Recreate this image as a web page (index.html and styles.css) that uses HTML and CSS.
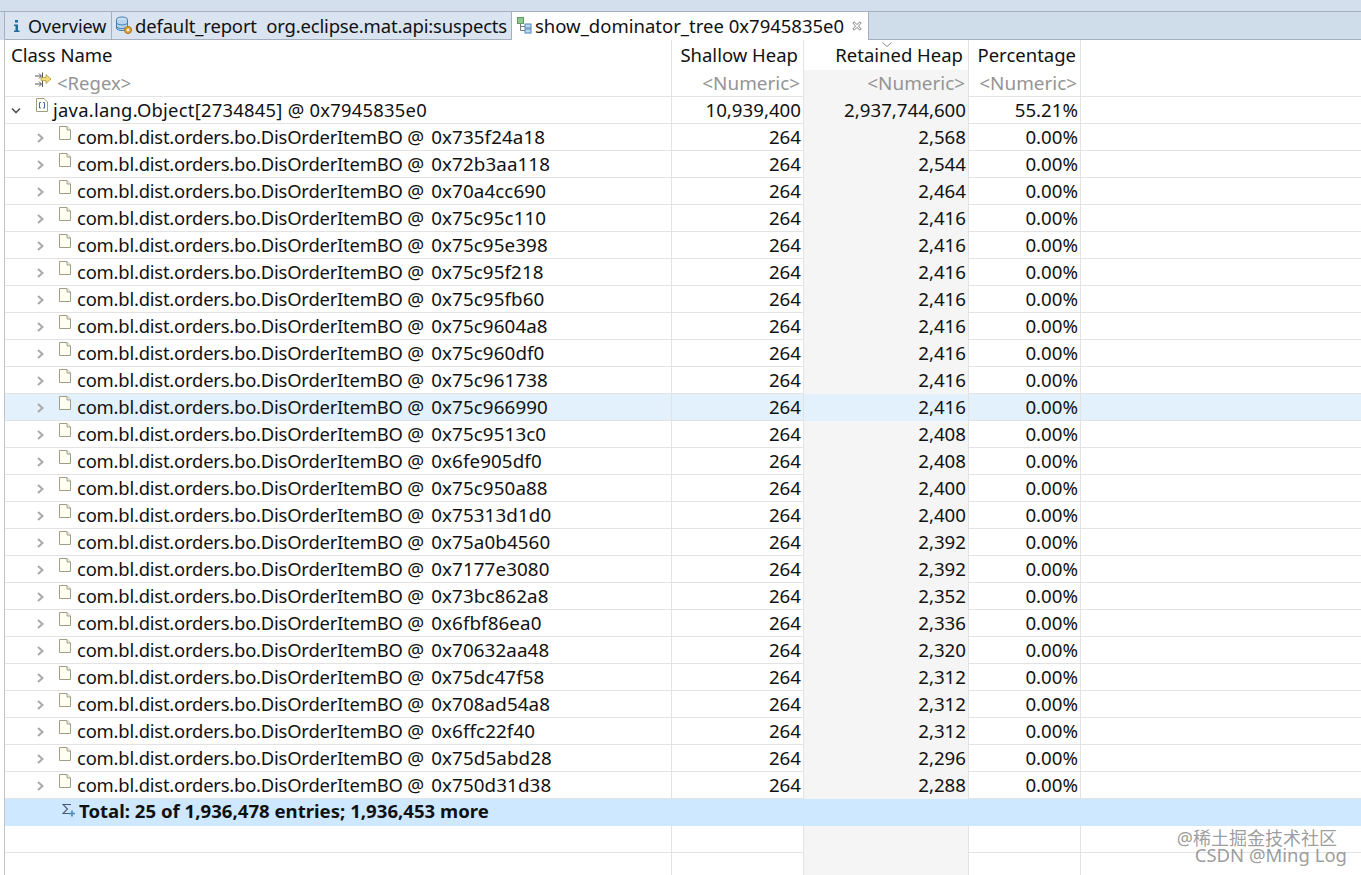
FILE: index.html
```html
<!DOCTYPE html>
<html lang="en">
<head>
<meta charset="utf-8">
<title>show_dominator_tree</title>
<link rel="stylesheet" href="styles.css">
</head>
<body>
<svg class="defs" width="0" height="0">
  <defs>
    <symbol id="file" viewBox="0 0 12 14"><path d="M.5 .5H8L11.500 4V13.500H.5Z" fill="#fffff2" stroke="#a09e84"/><path d="M8 .5V4H11.500" fill="#eeeeea" stroke="#a09e84"/></symbol>
    <symbol id="chev" viewBox="0 0 7 10"><path d="M1 1L5.500 5L1 9" fill="none" stroke="#a8a8a8" stroke-width="2"/></symbol>
  </defs>
</svg>
<div class="strip"></div>
<div class="tabs">
  <div class="tab t1">
    <svg class="ico-i" width="8" height="14" viewBox="0 0 8 14"><path d="M2 1h3v2.500h-3zM1 5.500h4v6h1.500v1.500h-5.500v-1.500h1.500v-4.500h-1.500z" fill="#1f6c9c"/></svg>
    <span>Overview</span>
  </div>
  <div class="tab t2">
    <svg class="ico-db" width="18" height="19" viewBox="0 0 18 19"><ellipse cx="7" cy="3.500" rx="5.500" ry="2.500" fill="#cfe2f3" stroke="#3f7fb5"/><path d="M1.500 3.500V12C1.500 13.500 4 14.500 7 14.500S12.500 13.500 12.500 12V3.500" fill="#b9d4ec" stroke="#3f7fb5"/><path d="M1.500 7C2.500 9.500 11.500 9.500 12.500 7M1.500 10.500C2.500 13 8 13 10 12" fill="none" stroke="#3f7fb5"/><circle cx="13" cy="14" r="3.500" fill="#e3a63c" stroke="#a8701a"/><circle cx="13" cy="14" r="1.200" fill="#fff"/></svg>
    <span class="pre">default_report  org.eclipse.mat.api:suspects</span>
  </div>
  <div class="tab t3">
    <svg class="ico-tree" width="15" height="17" viewBox="0 0 15 17"><rect x="0.500" y="0.500" width="6" height="6" fill="#8cc98c" stroke="#5f9a5f"/><path d="M3.500 7V13.500H8M3.500 9.500H8" fill="none" stroke="#777"/><rect x="8" y="7" width="6" height="4" fill="#bcd7ef" stroke="#4f86b8"/><rect x="8" y="12" width="6" height="4" fill="#bcd7ef" stroke="#4f86b8"/></svg>
    <span>show_dominator_tree 0x7945835e0</span>
    <svg class="ico-x" width="10" height="10" viewBox="0 0 10 10"><path d="M2 .8L5 3.500L8 .8L9.200 2L6.500 5L9.200 8L8 9.200L5 6.500L2 9.200L.8 8L3.500 5L.8 2Z" fill="#fff" stroke="#7a7a7a" stroke-width=".9"/></svg>
  </div>
  <div class="tab-rest"></div>
</div>
<main class="table">
  <div class="row head">
    <div class="c name"><span class="htext">Class Name</span></div>
    <div class="c num"><span class="hs">Shallow Heap</span></div>
    <div class="c num ret-head"><svg class="sort" width="10" height="5" viewBox="0 0 10 5"><path d="M.5 .5L5 4.500L9.500 .5" fill="none" stroke="#8a8a8a"/></svg><span class="hr">Retained Heap</span></div>
    <div class="c num"><span class="hp">Percentage</span></div>
    <div class="c"></div>
  </div>
  <div class="row filter">
    <div class="c name">
      <svg class="ico-filter" width="17" height="17" viewBox="0 0 17 17"><path d="M0 5H6M4 2.500L6.500 5L4 7.500M7.500 1.500V8M0 13H6M4 10.500L6.500 13L4 15.500M7.500 10V16" fill="none" stroke="#555"/><path d="M6 6.500H11V3.500L16 8L11 12.500V9.500H6Z" fill="#f3dc7a" stroke="#b59a3a" stroke-width=".8"/></svg>
      <span class="regex">&lt;Regex&gt;</span>
    </div>
    <div class="c num hint">&lt;Numeric&gt;</div>
    <div class="c num hint ret">&lt;Numeric&gt;</div>
    <div class="c num hint">&lt;Numeric&gt;</div>
    <div class="c"></div>
  </div>
  <div class="row">
    <div class="c name">
      <svg class="tw" width="10" height="8" viewBox="0 0 10 8"><path d="M1 1.500L5 5.500L9 1.500" fill="none" stroke="#555" stroke-width="1.700"/></svg>
      <svg class="ico-arr" width="12" height="14" viewBox="0 0 12 14"><path d="M.5 .5H8L11.500 4V13.500H.5Z" fill="#fffff2" stroke="#a09e84"/><path d="M5 4.500H3.500V10H5M7 4.500H8.500V10H7" fill="none" stroke="#3f6fa8"/></svg>
      <span>java.lang.Object[2734845] @ 0x7945835e0</span>
    </div>
    <div class="c num">10,939,400</div><div class="c num ret">2,937,744,600</div><div class="c num">55.21%</div><div class="c"></div>
  </div>
  <div class="row"><div class="c name kid"><svg class="ch"><use href="#chev"/></svg><svg class="fi"><use href="#file"/></svg><span>com.bl.dist.orders.bo.DisOrderItemBO <i>@ 0x735f24a18</i></span></div><div class="c num">264</div><div class="c num ret">2,568</div><div class="c num">0.00%</div><div class="c"></div></div>
  <div class="row"><div class="c name kid"><svg class="ch"><use href="#chev"/></svg><svg class="fi"><use href="#file"/></svg><span>com.bl.dist.orders.bo.DisOrderItemBO <i>@ 0x72b3aa118</i></span></div><div class="c num">264</div><div class="c num ret">2,544</div><div class="c num">0.00%</div><div class="c"></div></div>
  <div class="row"><div class="c name kid"><svg class="ch"><use href="#chev"/></svg><svg class="fi"><use href="#file"/></svg><span>com.bl.dist.orders.bo.DisOrderItemBO <i>@ 0x70a4cc690</i></span></div><div class="c num">264</div><div class="c num ret">2,464</div><div class="c num">0.00%</div><div class="c"></div></div>
  <div class="row"><div class="c name kid"><svg class="ch"><use href="#chev"/></svg><svg class="fi"><use href="#file"/></svg><span>com.bl.dist.orders.bo.DisOrderItemBO <i>@ 0x75c95c110</i></span></div><div class="c num">264</div><div class="c num ret">2,416</div><div class="c num">0.00%</div><div class="c"></div></div>
  <div class="row"><div class="c name kid"><svg class="ch"><use href="#chev"/></svg><svg class="fi"><use href="#file"/></svg><span>com.bl.dist.orders.bo.DisOrderItemBO <i>@ 0x75c95e398</i></span></div><div class="c num">264</div><div class="c num ret">2,416</div><div class="c num">0.00%</div><div class="c"></div></div>
  <div class="row"><div class="c name kid"><svg class="ch"><use href="#chev"/></svg><svg class="fi"><use href="#file"/></svg><span>com.bl.dist.orders.bo.DisOrderItemBO <i>@ 0x75c95f218</i></span></div><div class="c num">264</div><div class="c num ret">2,416</div><div class="c num">0.00%</div><div class="c"></div></div>
  <div class="row"><div class="c name kid"><svg class="ch"><use href="#chev"/></svg><svg class="fi"><use href="#file"/></svg><span>com.bl.dist.orders.bo.DisOrderItemBO <i>@ 0x75c95fb60</i></span></div><div class="c num">264</div><div class="c num ret">2,416</div><div class="c num">0.00%</div><div class="c"></div></div>
  <div class="row"><div class="c name kid"><svg class="ch"><use href="#chev"/></svg><svg class="fi"><use href="#file"/></svg><span>com.bl.dist.orders.bo.DisOrderItemBO <i>@ 0x75c9604a8</i></span></div><div class="c num">264</div><div class="c num ret">2,416</div><div class="c num">0.00%</div><div class="c"></div></div>
  <div class="row"><div class="c name kid"><svg class="ch"><use href="#chev"/></svg><svg class="fi"><use href="#file"/></svg><span>com.bl.dist.orders.bo.DisOrderItemBO <i>@ 0x75c960df0</i></span></div><div class="c num">264</div><div class="c num ret">2,416</div><div class="c num">0.00%</div><div class="c"></div></div>
  <div class="row"><div class="c name kid"><svg class="ch"><use href="#chev"/></svg><svg class="fi"><use href="#file"/></svg><span>com.bl.dist.orders.bo.DisOrderItemBO <i>@ 0x75c961738</i></span></div><div class="c num">264</div><div class="c num ret">2,416</div><div class="c num">0.00%</div><div class="c"></div></div>
  <div class="row sel"><div class="c name kid"><svg class="ch"><use href="#chev"/></svg><svg class="fi"><use href="#file"/></svg><span>com.bl.dist.orders.bo.DisOrderItemBO <i>@ 0x75c966990</i></span></div><div class="c num">264</div><div class="c num ret">2,416</div><div class="c num">0.00%</div><div class="c"></div></div>
  <div class="row"><div class="c name kid"><svg class="ch"><use href="#chev"/></svg><svg class="fi"><use href="#file"/></svg><span>com.bl.dist.orders.bo.DisOrderItemBO <i>@ 0x75c9513c0</i></span></div><div class="c num">264</div><div class="c num ret">2,408</div><div class="c num">0.00%</div><div class="c"></div></div>
  <div class="row"><div class="c name kid"><svg class="ch"><use href="#chev"/></svg><svg class="fi"><use href="#file"/></svg><span>com.bl.dist.orders.bo.DisOrderItemBO <i>@ 0x6fe905df0</i></span></div><div class="c num">264</div><div class="c num ret">2,408</div><div class="c num">0.00%</div><div class="c"></div></div>
  <div class="row"><div class="c name kid"><svg class="ch"><use href="#chev"/></svg><svg class="fi"><use href="#file"/></svg><span>com.bl.dist.orders.bo.DisOrderItemBO <i>@ 0x75c950a88</i></span></div><div class="c num">264</div><div class="c num ret">2,400</div><div class="c num">0.00%</div><div class="c"></div></div>
  <div class="row"><div class="c name kid"><svg class="ch"><use href="#chev"/></svg><svg class="fi"><use href="#file"/></svg><span>com.bl.dist.orders.bo.DisOrderItemBO <i>@ 0x75313d1d0</i></span></div><div class="c num">264</div><div class="c num ret">2,400</div><div class="c num">0.00%</div><div class="c"></div></div>
  <div class="row"><div class="c name kid"><svg class="ch"><use href="#chev"/></svg><svg class="fi"><use href="#file"/></svg><span>com.bl.dist.orders.bo.DisOrderItemBO <i>@ 0x75a0b4560</i></span></div><div class="c num">264</div><div class="c num ret">2,392</div><div class="c num">0.00%</div><div class="c"></div></div>
  <div class="row"><div class="c name kid"><svg class="ch"><use href="#chev"/></svg><svg class="fi"><use href="#file"/></svg><span>com.bl.dist.orders.bo.DisOrderItemBO <i>@ 0x7177e3080</i></span></div><div class="c num">264</div><div class="c num ret">2,392</div><div class="c num">0.00%</div><div class="c"></div></div>
  <div class="row"><div class="c name kid"><svg class="ch"><use href="#chev"/></svg><svg class="fi"><use href="#file"/></svg><span>com.bl.dist.orders.bo.DisOrderItemBO <i>@ 0x73bc862a8</i></span></div><div class="c num">264</div><div class="c num ret">2,352</div><div class="c num">0.00%</div><div class="c"></div></div>
  <div class="row"><div class="c name kid"><svg class="ch"><use href="#chev"/></svg><svg class="fi"><use href="#file"/></svg><span>com.bl.dist.orders.bo.DisOrderItemBO <i>@ 0x6fbf86ea0</i></span></div><div class="c num">264</div><div class="c num ret">2,336</div><div class="c num">0.00%</div><div class="c"></div></div>
  <div class="row"><div class="c name kid"><svg class="ch"><use href="#chev"/></svg><svg class="fi"><use href="#file"/></svg><span>com.bl.dist.orders.bo.DisOrderItemBO <i>@ 0x70632aa48</i></span></div><div class="c num">264</div><div class="c num ret">2,320</div><div class="c num">0.00%</div><div class="c"></div></div>
  <div class="row"><div class="c name kid"><svg class="ch"><use href="#chev"/></svg><svg class="fi"><use href="#file"/></svg><span>com.bl.dist.orders.bo.DisOrderItemBO <i>@ 0x75dc47f58</i></span></div><div class="c num">264</div><div class="c num ret">2,312</div><div class="c num">0.00%</div><div class="c"></div></div>
  <div class="row"><div class="c name kid"><svg class="ch"><use href="#chev"/></svg><svg class="fi"><use href="#file"/></svg><span>com.bl.dist.orders.bo.DisOrderItemBO <i>@ 0x708ad54a8</i></span></div><div class="c num">264</div><div class="c num ret">2,312</div><div class="c num">0.00%</div><div class="c"></div></div>
  <div class="row"><div class="c name kid"><svg class="ch"><use href="#chev"/></svg><svg class="fi"><use href="#file"/></svg><span>com.bl.dist.orders.bo.DisOrderItemBO <i>@ 0x6ffc22f40</i></span></div><div class="c num">264</div><div class="c num ret">2,312</div><div class="c num">0.00%</div><div class="c"></div></div>
  <div class="row"><div class="c name kid"><svg class="ch"><use href="#chev"/></svg><svg class="fi"><use href="#file"/></svg><span>com.bl.dist.orders.bo.DisOrderItemBO <i>@ 0x75d5abd28</i></span></div><div class="c num">264</div><div class="c num ret">2,296</div><div class="c num">0.00%</div><div class="c"></div></div>
  <div class="row"><div class="c name kid"><svg class="ch"><use href="#chev"/></svg><svg class="fi"><use href="#file"/></svg><span>com.bl.dist.orders.bo.DisOrderItemBO <i>@ 0x750d31d38</i></span></div><div class="c num">264</div><div class="c num ret">2,288</div><div class="c num">0.00%</div><div class="c"></div></div>
  <div class="row total">
    <div class="c name">
      <svg class="ico-sum" width="14" height="15" viewBox="0 0 14 15"><path d="M9 1.500H1L5.500 6L1 10.500H7" fill="none" stroke="#4a5a70" stroke-width="1.100"/><path d="M10 7.500V13.500M7 10.500H13" stroke="#4a86b8" stroke-width="1.600"/></svg>
      <span>Total: 25 of 1,936,478 entries; 1,936,453 more</span>
    </div>
    <div class="c"></div><div class="c"></div><div class="c"></div><div class="c"></div>
  </div>
  <div class="row"><div class="c name"></div><div class="c"></div><div class="c ret"></div><div class="c"></div><div class="c"></div></div>
  <div class="row last"><div class="c name"></div><div class="c"></div><div class="c ret"></div><div class="c"></div><div class="c"></div></div>
</main>
<div class="watermark">
  <div class="wm1">@稀土掘金技术社区</div>
  <div class="wm2">CSDN @Ming Log</div>
</div>
</body>
</html>
```
FILE: styles.css
```css
* { box-sizing: border-box; }
html, body { margin: 0; height: 875px; overflow: hidden; background: #fff; }
body {
  position: relative;
  font-family: "Noto Sans", "Noto Sans CJK SC", sans-serif;
  font-size: 18.500px;
  color: #111;
  padding-left: 4px;
}
body::before {
  content: "";
  position: absolute;
  left: 4px; top: 39px; bottom: 0;
  width: 1px;
  background: #c4c4c4;
}
svg { flex: none; }
.defs { position: absolute; }
.strip { height: 11px; margin-left: -4px; background: #d3dfec; }
.tabs {
  display: flex;
  height: 29px;
  margin-left: -4px;
  padding-left: 4px;
  background: #d3dfec;
  border-top: 1px solid #a6b0bd;
}
.tab {
  display: flex;
  align-items: center;
  height: 28px;
  white-space: nowrap;
  background: #d9e4f0;
  border-right: 1px solid #a6b0bd;
  border-bottom: 1px solid #a6b0bd;
}
.t1 { width: 108px; padding-left: 8px; gap: 7px; border-left: 1px solid #a6b0bd; font-size: 18px; }
.t2 { width: 400px; padding-left: 3px; gap: 2px; }
.t3 { width: 357px; padding: 0 0 1px 5px; gap: 3px; background: #fff; border-bottom: 0; }
.ico-x { margin-left: 5px; }
.pre { white-space: pre; letter-spacing: -.17px; }
.tab-rest { flex: 1; background: #cfdcea; border-bottom: 1px solid #a6b0bd; }

.table { display: block; }
.row {
  display: grid;
  grid-template-columns: 667px 132px 165px 112px 1fr;
  height: 27px;
  margin-left: 1px;
  border-bottom: 1px solid #e3e3e3;
  line-height: 26px;
  white-space: nowrap;
}
.c { border-right: 1px solid #e3e3e3; min-width: 0; position: relative; height: 27px; }
.c:last-child { border-right: 0; }
.name { display: flex; align-items: flex-start; }
.num { text-align: right; padding-right: 2px; font-size: 18.700px; }
.ret { background: #f5f5f5; }
.sel { background: #e3f1fc; }
.sel .ret { background: #e3f1fc; }
.head { height: 30px; border-bottom: 0; line-height: 30px; }
.head .c { height: 30px; }
.head .num { font-size: 18.500px; }
.filter { height: 27px; }
.htext { margin-left: 6px; }
.hs { margin-right: 3px; }
.hr { margin-right: 3px; }
.hp { margin-right: 2px; }
.sort { position: absolute; left: 78px; top: 2px; }
.hint, .regex { color: #949494; }
.hint { font-size: 18.900px; padding-right: 3px; }
.filter .ret { background: #f5f5f5; }
.ico-filter { margin: 1px 0 0 30px; }
.regex { margin-left: 5px; }
.tw { margin: 10px 0 0 6px; }
.ico-arr { margin: 1px 0 0 15px; }
.ico-arr + span { margin-left: 5px; font-size: 18.400px; letter-spacing: .25px; }
.kid .ch { width: 7px; height: 10px; margin: 9px 0 0 32px; }
.kid .fi { width: 12px; height: 14px; margin: 2px 0 0 15px; }
.kid span { margin-left: 6px; font-size: 18.400px; letter-spacing: -.2px; }
.kid i { font-style: normal; font-size: 18.800px; letter-spacing: .1px; word-spacing: 2px; }
.total { background: #cde8ff; font-weight: 700; border-bottom: 0; line-height: 24px; font-size: 18.600px; }
.total .c { border-right: 0; }
.ico-sum { margin: 4px 0 0 57px; }
.total span { margin-left: 3px; }
.last { border-bottom: 0; }
.watermark {
  position: absolute;
  right: 14px;
  top: 831px;
  color: rgba(100, 100, 100, .65);
  font-size: 18.500px;
  line-height: 15px;
  text-align: right;
}
.wm1 { margin-right: 10px; font-size: 18px; }
.wm2 { margin-top: 1px; }
```
